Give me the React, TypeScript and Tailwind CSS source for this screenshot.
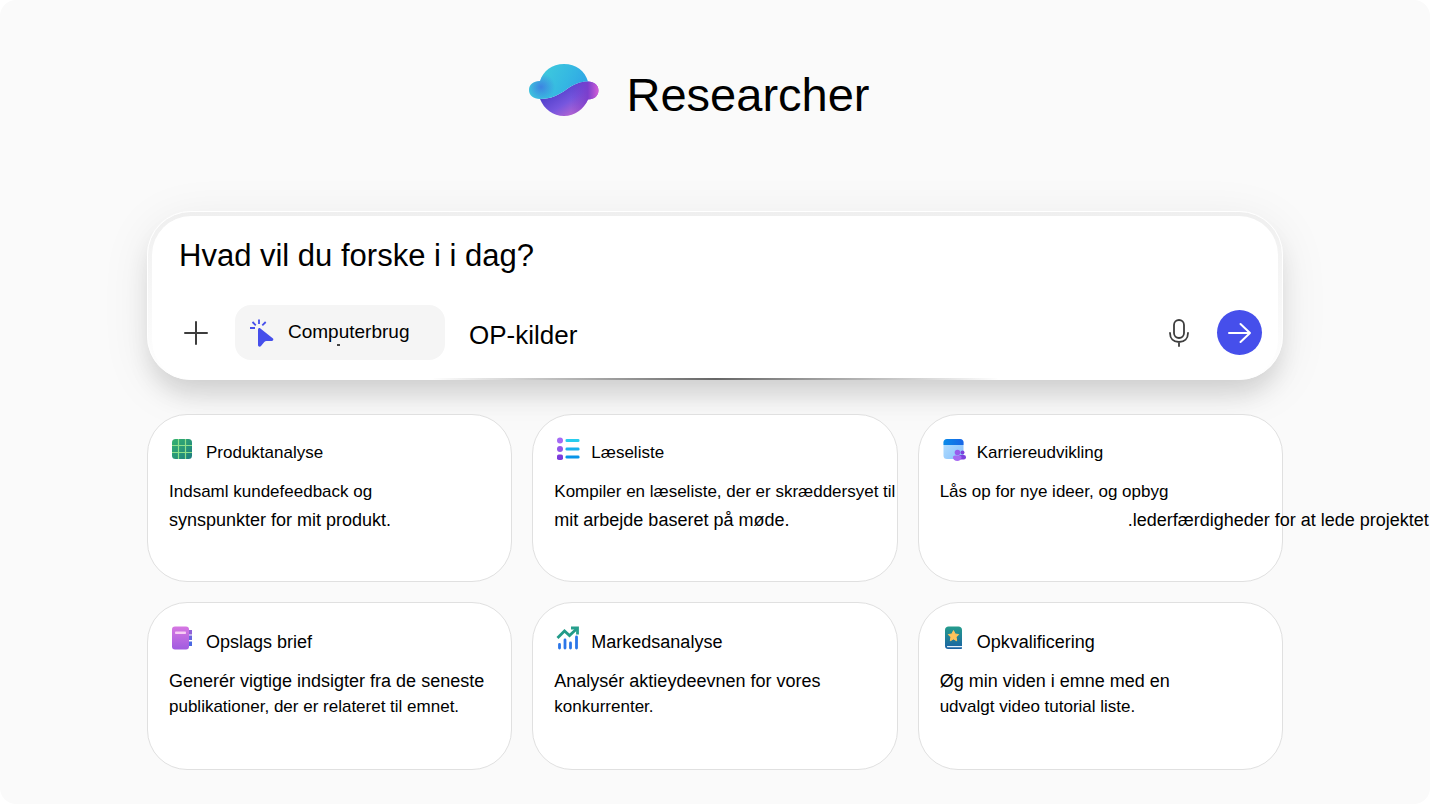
import type { ReactNode } from 'react'

function PlanetLogo() {
  return (
    <svg className="h-[52px] w-[70px] flex-none" viewBox="0 0 70 52" aria-hidden="true">
      <defs>
        <linearGradient id="planetTop" x1="12" y1="4" x2="56" y2="28" gradientUnits="userSpaceOnUse">
          <stop offset="0" stopColor="#3fcbdc" />
          <stop offset="0.55" stopColor="#35b8e2" />
          <stop offset="1" stopColor="#2fa2e6" />
        </linearGradient>
        <radialGradient id="planetShade" cx="12" cy="23" r="14" gradientUnits="userSpaceOnUse">
          <stop offset="0" stopColor="#3d78e2" stopOpacity="0.85" />
          <stop offset="1" stopColor="#3d78e2" stopOpacity="0" />
        </radialGradient>
        <linearGradient id="planetBottom" x1="26" y1="26" x2="44" y2="54" gradientUnits="userSpaceOnUse">
          <stop offset="0" stopColor="#5240cb" />
          <stop offset="0.5" stopColor="#7656de" />
          <stop offset="1" stopColor="#c067cf" />
        </linearGradient>
        <linearGradient id="planetRight" x1="42" y1="0" x2="70" y2="0" gradientUnits="userSpaceOnUse">
          <stop offset="0" stopColor="#6a3acb" stopOpacity="0" />
          <stop offset="0.6" stopColor="#7a3ccb" stopOpacity="0.9" />
          <stop offset="1" stopColor="#d860d8" />
        </linearGradient>
      </defs>
      <path
        d="M11 35C22 35 30 31 38 25C45 20 51 17.500 59 17.500C65 17.500 69.500 21 69.500 26.500C69.500 31.500 65.500 35.500 59 35.500C55 45 46 52 35 52C24 52 15 45 11 35Z"
        fill="url(#planetBottom)"
      />
      <path
        d="M38 25C45 20 51 17.500 59 17.500C65 17.500 69.500 21 69.500 26.500C69.500 31.500 65.500 35.500 59 35.500C56 42 50 48 42 51Z"
        fill="url(#planetRight)"
      />
      <path
        d="M11 17C14 7 23 0 35 0C47 0 56 7 59 17.500C51 17.500 45 20 38 25C30 31 22 35 11 35C4.500 35 0 31.500 0 26C0 20.500 4.500 17 11 17Z"
        fill="url(#planetTop)"
      />
      <path
        d="M11 17C14 7 23 0 35 0C47 0 56 7 59 17.500C51 17.500 45 20 38 25C30 31 22 35 11 35C4.500 35 0 31.500 0 26C0 20.500 4.500 17 11 17Z"
        fill="url(#planetShade)"
      />
    </svg>
  )
}

function CursorIcon() {
  return (
    <svg className="h-7 w-6 flex-none" viewBox="0 0 24 28" aria-hidden="true">
      <path
        d="M8 10.500C8 9.200 9.400 8.500 10.400 9.400L22.700 19.300C23.900 20.300 23.300 21.900 21.800 21.900H16.500C15.600 21.900 14.900 22.300 14.300 23L11 27.100C10 28.300 8 27.700 8 26.100Z"
        fill="#464feb"
      />
      <path
        d="M9 .5V5M2.500 3L5.800 6.300M15.700 3L12.300 6.300M0 9H5"
        stroke="#464feb"
        strokeWidth="1.800"
        fill="none"
      />
    </svg>
  )
}

function MicIcon() {
  return (
    <svg
      className="h-7 w-5"
      viewBox="0 0 20 28"
      fill="none"
      stroke="#3d3d3d"
      strokeWidth="1.800"
      strokeLinecap="round"
      aria-hidden="true"
    >
      <rect x="5" y="1" width="10" height="18" rx="5" />
      <path d="M1 14C1 19.500 4.500 23 10 23C15.500 23 19 19.500 19 14M10 23V27" />
    </svg>
  )
}

function GridIcon() {
  return (
    <svg className="h-6 w-6" viewBox="0 0 24 24" aria-hidden="true">
      <defs>
        <linearGradient id="grid" x1="0" y1="0" x2="1" y2="1">
          <stop offset="0" stopColor="#35b36f" />
          <stop offset="1" stopColor="#1d7d80" />
        </linearGradient>
      </defs>
      <rect x="1" y="2" width="20" height="20" rx="3.500" fill="url(#grid)" />
      <path d="M7.500 2V22M14.500 2V22M1 8.500H21M1 15.500H21" stroke="#8fe08b" strokeWidth="1.200" />
    </svg>
  )
}

function ListIcon() {
  return (
    <svg className="h-6 w-6" viewBox="0 0 24 24" aria-hidden="true">
      <circle cx="4" cy="3.500" r="3" fill="#a56bf5" />
      <circle cx="4" cy="12" r="3" fill="#9156ea" />
      <rect x="1" y="17.500" width="6" height="5.500" rx="1.800" fill="#7c3bdc" />
      <rect x="9.500" y="2" width="14" height="3" rx="1.300" fill="#27cdee" />
      <rect x="9.500" y="10.500" width="14" height="3" rx="1.300" fill="#18b0ec" />
      <rect x="9.500" y="18.500" width="14" height="3" rx="1.300" fill="#0894e8" />
    </svg>
  )
}

function TeamIcon() {
  return (
    <svg className="h-6 w-6" viewBox="0 0 24 24" aria-hidden="true">
      <defs>
        <linearGradient id="teamPage" x1="0" y1="0" x2="1" y2="1">
          <stop offset="0" stopColor="#b5e0ff" />
          <stop offset="1" stopColor="#86bffc" />
        </linearGradient>
        <linearGradient id="teamBar" x1="0" y1="0" x2="1" y2="0">
          <stop offset="0" stopColor="#098be9" />
          <stop offset="1" stopColor="#1965e6" />
        </linearGradient>
      </defs>
      <rect x="1.500" y="2" width="20" height="20" rx="3.500" fill="url(#teamPage)" />
      <path d="M1.500 8V5.500C1.500 3.500 3 2 5 2H18C20 2 21.500 3.500 21.500 5.500V8Z" fill="url(#teamBar)" />
      <circle cx="20.500" cy="15.500" r="2" fill="#7c42dc" />
      <rect x="16.500" y="18" width="7.500" height="4.500" rx="2.200" fill="#7c42dc" />
      <circle cx="15.500" cy="15.500" r="2.800" fill="#985cec" />
      <path d="M11 20.500C11 19.300 11.800 18.600 13 18.600H17.500C18.700 18.600 19.500 19.300 19.500 20.500C19.500 22.800 17.500 24 15.300 24C13 24 11 22.800 11 20.500Z" fill="#a66af2" />
    </svg>
  )
}

function NotebookIcon() {
  return (
    <svg className="h-6 w-6" viewBox="0 0 24 24" aria-hidden="true">
      <defs>
        <linearGradient id="notebook" x1="0" y1="0" x2="0" y2="1">
          <stop offset="0" stopColor="#d677e2" />
          <stop offset="1" stopColor="#a05be0" />
        </linearGradient>
      </defs>
      <path d="M16 4H21V8.500H16Z" fill="#8f61d8" />
      <path d="M16 9.500H21V14H16Z" fill="#6a64df" />
      <path d="M16 15.500H21V20H16Z" fill="#4a68e2" />
      <rect x="1" y=".5" width="17" height="23" rx="3" fill="url(#notebook)" />
      <rect x="4" y="5.500" width="11" height="2.500" rx=".8" fill="#f8cdf4" />
    </svg>
  )
}

function ChartIcon() {
  return (
    <svg className="h-6 w-6" viewBox="0 0 24 24" fill="none" aria-hidden="true">
      <path d="M1.500 12L8.500 5L13.500 9.500L21 2.500" stroke="#229b89" strokeWidth="2.800" />
      <path d="M15 2H21.500V8.500" stroke="#279f8d" strokeWidth="2.800" />
      <path
        d="M3.500 18.500V22M9 14V22M14.500 17V22M20.500 11V22"
        stroke="#2b76e8"
        strokeWidth="2.800"
        strokeLinecap="round"
      />
    </svg>
  )
}

function StarBookIcon() {
  return (
    <svg className="h-6 w-6" viewBox="0 0 24 24" aria-hidden="true">
      <defs>
        <linearGradient id="starBook" x1="0" y1="0" x2="0" y2="1">
          <stop offset="0" stopColor="#249c8c" />
          <stop offset="1" stopColor="#1b62a4" />
        </linearGradient>
      </defs>
      <path d="M3 4C3 2 4.500 .5 6.500 .5H16.500C18.500 .5 20 2 20 4V22C20 22.600 19.600 23 19 23H6C4.300 23 3 21.700 3 20Z" fill="url(#starBook)" />
      <path d="M5 20H20V21.300H5.600C5.200 21.300 5 21 5 20Z" fill="#e3f1fb" />
      <path
        d="M11.500 4.600L13.100 8L16.700 8.500L14.100 11.100L14.700 14.800L11.500 13L8.300 14.800L8.900 11.100L6.300 8.500L9.900 8Z"
        fill="#ffc35b"
        stroke="#ffc35b"
        strokeLinejoin="round"
      />
    </svg>
  )
}

type Suggestion = {
  title: string
  icon: ReactNode
  first: string
  second: string
  shifted?: boolean
}

const starters: Suggestion[] = [
  {
    title: 'Produktanalyse',
    icon: <GridIcon />,
    first: 'Indsaml kundefeedback og',
    second: 'synspunkter for mit produkt.',
  },
  {
    title: 'Læseliste',
    icon: <ListIcon />,
    first: 'Kompiler en læseliste, der er skræddersyet til',
    second: 'mit arbejde baseret på møde.',
  },
  {
    title: 'Karriereudvikling',
    icon: <TeamIcon />,
    first: 'Lås op for nye ideer, og opbyg',
    second: '.lederfærdigheder for at lede projektet',
    shifted: true,
  },
]

const briefs: Suggestion[] = [
  {
    title: 'Opslags brief',
    icon: <NotebookIcon />,
    first: 'Generér vigtige indsigter fra de seneste',
    second: 'publikationer, der er relateret til emnet.',
  },
  {
    title: 'Markedsanalyse',
    icon: <ChartIcon />,
    first: 'Analysér aktieydeevnen for vores',
    second: 'konkurrenter.',
  },
  {
    title: 'Opkvalificering',
    icon: <StarBookIcon />,
    first: 'Øg min viden i emne med en',
    second: 'udvalgt video tutorial liste.',
  },
]

const cardClass =
  'flex h-[168px] min-w-0 flex-col items-start rounded-[40px] border border-[#e0e0e0] bg-white pl-[21px] text-left whitespace-nowrap'

function StarterCard({ title, icon, first, second, shifted }: Suggestion) {
  return (
    <button type="button" className={`${cardClass} pt-[22px]`}>
      <span className="flex items-start gap-[11px] pl-[2px] text-[17px] leading-6">
        {icon}
        <span className="pt-1">{title}</span>
      </span>
      <span className="mt-[13px] text-[17px] leading-7">{first}</span>
      <span className={shifted ? 'pl-[188px] text-[18px] leading-7' : 'text-[18px] leading-7'}>
        {second}
      </span>
    </button>
  )
}

function BriefCard({ title, icon, first, second }: Suggestion) {
  return (
    <button type="button" className={`${cardClass} pt-[23px]`}>
      <span className="flex items-start gap-[11px] pl-[2px] text-[18px] leading-6">
        {icon}
        <span className="pt-1">{title}</span>
      </span>
      <span className="mt-[13px] text-[18px] leading-7">{first}</span>
      <span className="text-[17px] leading-6">{second}</span>
    </button>
  )
}

function Composer() {
  return (
    <form
      className="relative rounded-[44px] border border-white bg-linear-to-b from-[#efefef] to-white p-1 pb-0 shadow-[0_18px_24px_-4px_rgba(0,0,0,0.12),0_10px_50px_rgba(0,0,0,0.08)]"
      onSubmit={(e) => e.preventDefault()}
    >
      <div className="rounded-[39px] bg-white pb-[19px] pl-[27px] pr-4 pt-5">
        <input
          type="text"
          aria-label="Hvad vil du forske i i dag?"
          placeholder="Hvad vil du forske i i dag?"
          className="block h-10 w-full bg-transparent text-[31px] leading-10 outline-none placeholder:text-black"
        />
        <div className="mt-[29px] flex items-center">
          <button type="button" aria-label="Tilføj" className="ml-px flex-none p-1">
            <svg className="h-6 w-6" viewBox="0 0 24 24" stroke="#3d3d3d" strokeWidth="2" strokeLinecap="round" aria-hidden="true">
              <path d="M12 1V23M1 12H23" />
            </svg>
          </button>
          <button
            type="button"
            className="relative ml-[23px] flex h-[55px] w-[210px] flex-none items-center gap-[14px] rounded-2xl bg-[#f5f5f5] pl-[15px] text-[19px] leading-6"
          >
            <CursorIcon />
            <span className="pb-px">Computerbrug</span>
            <span className="absolute bottom-[14px] left-[102px] h-0.5 w-[3px] bg-[#444]" />
          </button>
          <button type="button" className="ml-6 pt-1 text-[26px] leading-8 whitespace-nowrap">
            OP-kilder
          </button>
          <button type="button" aria-label="Mikrofon" className="ml-auto flex-none">
            <MicIcon />
          </button>
          <button
            type="submit"
            aria-label="Send"
            className="ml-7 flex h-[45px] w-[45px] flex-none items-center justify-center rounded-full bg-[#464feb]"
          >
            <svg className="h-6 w-6" viewBox="0 0 24 24" fill="none" stroke="white" strokeWidth="2" strokeLinecap="round" strokeLinejoin="round" aria-hidden="true">
              <path d="M1 12H22M12.500 3L22 12L12.500 21" />
            </svg>
          </button>
        </div>
      </div>
      <div className="absolute -bottom-px left-1/4 right-1/4 h-0.5 bg-linear-to-r from-transparent via-[#666] to-transparent" />
    </form>
  )
}

export default function App() {
  return (
    <div className="bg-white font-['Liberation_Sans',Arial,sans-serif] text-black">
      <main className="min-h-screen overflow-x-clip rounded-2xl bg-[#fafafa] pb-[34px] pt-16">
        <div className="mx-auto w-full max-w-[1136px]">
          <header className="flex items-start justify-center gap-7 pr-8">
            <PlanetLogo />
            <h1 className="pt-1 text-[47px] leading-[54px]">Researcher</h1>
          </header>
          <div className="mt-[89px]">
            <Composer />
          </div>
          <div className="relative mt-[34px] grid grid-cols-3 gap-5">
            {starters.map((s) => (
              <StarterCard key={s.title} {...s} />
            ))}
            {briefs.map((s) => (
              <BriefCard key={s.title} {...s} />
            ))}
          </div>
        </div>
      </main>
    </div>
  )
}
